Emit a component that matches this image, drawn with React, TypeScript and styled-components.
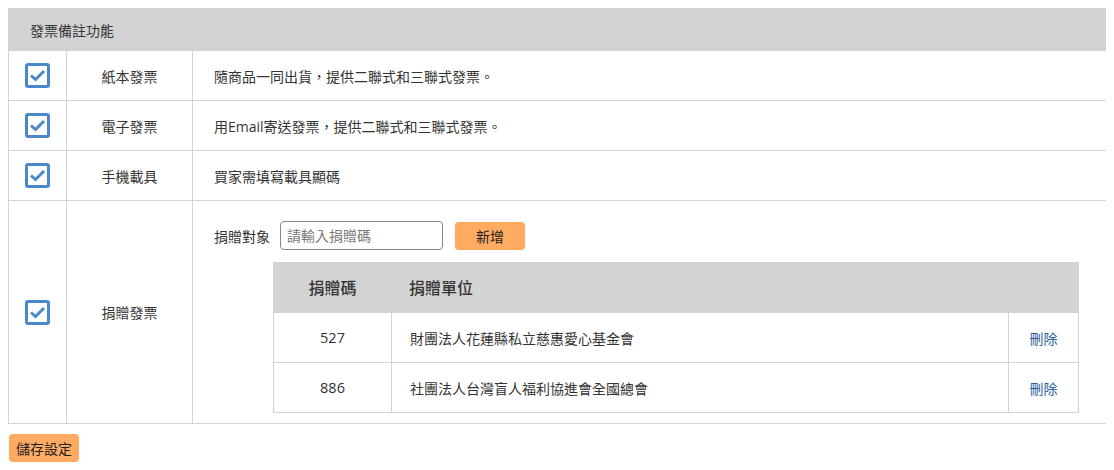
import React, { useState } from 'react';
import styled, { createGlobalStyle } from 'styled-components';

const GlobalStyle = createGlobalStyle`
  body {
    margin: 8px;
    font-family: "Open Sans", "Noto Sans CJK TC", sans-serif;
    font-size: 14px;
    color: #333;
    background: #fff;
  }
  * { box-sizing: border-box; }
`;

const SettingsTable = styled.div`
  width: 1101px;
  border: 1px solid #d3d3d3;
  display: grid;
  grid-template-columns: 57px 126px 1fr;
`;

const HeaderBar = styled.div`
  grid-column: 1 / -1;
  height: 41px;
  background: #d3d3d3;
  display: flex;
  align-items: center;
  padding-left: 21px;
  font-size: 14px;
  color: #333;
`;

const Cell = styled.div`
  height: 50px;
  border-top: 1px solid #d3d3d3;
  display: flex;
  align-items: center;
  font-size: 14px;
`;

const CheckCell = styled(Cell)`
  height: auto;
  min-height: 50px;
  justify-content: center;
`;

const NameCell = styled(CheckCell)`
  border-left: 1px solid #d3d3d3;
`;

const DescCell = styled(Cell)`
  border-left: 1px solid #d3d3d3;
  padding-left: 21px;
`;

const DonateCell = styled.div`
  border-top: 1px solid #d3d3d3;
  border-left: 1px solid #d3d3d3;
  padding: 20px 29px 10px 21px;
  display: flex;
  flex-direction: column;
`;

const Check = styled.span`
  width: 25px;
  height: 25px;
  border: 3px solid #4a88c9;
  border-radius: 3px;
  display: flex;
  align-items: center;
  justify-content: center;
  cursor: pointer;
`;

const FormRow = styled.div`
  display: flex;
  align-items: center;
  font-size: 14px;
`;

const FieldLabel = styled.span`
  margin-right: 10px;
`;

const TextInput = styled.input`
  width: 163px;
  height: 29px;
  border: 1px solid #888;
  border-radius: 4px;
  padding: 0 6px;
  font-family: "Open Sans", "Noto Sans CJK TC", sans-serif;
  font-size: 14px;
  color: #333;
  &::placeholder { color: #777; }
`;

const OrangeButton = styled.button<{ $w: number }>`
  width: ${(p) => p.$w}px;
  height: 28px;
  background: #ffab62;
  border: none;
  border-radius: 4px;
  font-family: "Open Sans", "Noto Sans CJK TC", sans-serif;
  font-size: 14px;
  color: #222;
  cursor: pointer;
  padding: 0;
`;

const AddButton = styled(OrangeButton)`
  margin-left: 12px;
`;

const SaveButton = styled(OrangeButton)`
  margin-top: 10px;
  margin-left: 1px;
`;

const DonateTable = styled.div`
  margin: 12px 0 0 59px;
  border: 1px solid #d3d3d3;
  border-top: none;
  display: grid;
  grid-template-columns: 117px 1fr 70px;
`;

const DHead = styled.div<{ $center?: boolean }>`
  height: 50px;
  background: #d3d3d3;
  display: flex;
  align-items: center;
  justify-content: ${(p) => (p.$center ? 'center' : 'flex-start')};
  padding-left: ${(p) => (p.$center ? '0' : '18px')};
  font-size: 16px;
  font-weight: 500;
  color: #333;
`;

const DCell = styled.div<{ $center?: boolean; $divider?: boolean }>`
  height: 50px;
  border-top: 1px solid #d3d3d3;
  border-left: ${(p) => (p.$divider ? '1px solid #d3d3d3' : 'none')};
  display: flex;
  align-items: center;
  justify-content: ${(p) => (p.$center ? 'center' : 'flex-start')};
  padding-left: ${(p) => (p.$center ? '0' : '18px')};
  font-size: 14px;
`;

const NumText = styled.span`
  font-size: 14.5px;
`;

const DeleteLink = styled.a`
  color: #2b5d9c;
  cursor: pointer;
  text-decoration: none;
`;

const CheckIcon = () => (
  <svg width="17" height="13" viewBox="0 0 17 13">
    <path d="M2 6.5 L6.5 10.5 L15 2" fill="none" stroke="#4a88c9" strokeWidth="3" />
  </svg>
);

const types = [
  { name: '紙本發票', desc: '隨商品一同出貨，提供二聯式和三聯式發票。' },
  { name: '電子發票', desc: '用Email寄送發票，提供二聯式和三聯式發票。' },
  { name: '手機載具', desc: '買家需填寫載具顯碼' },
];

const App: React.FC = () => {
  const [code, setCode] = useState('');
  const [units] = useState([
    { code: '527', name: '財團法人花蓮縣私立慈惠愛心基金會' },
    { code: '886', name: '社團法人台灣盲人福利協進會全國總會' },
  ]);

  return (
    <>
      <GlobalStyle />
      <SettingsTable>
        <HeaderBar>發票備註功能</HeaderBar>
        {types.map((t) => (
          <React.Fragment key={t.name}>
            <CheckCell>
              <Check><CheckIcon /></Check>
            </CheckCell>
            <NameCell>{t.name}</NameCell>
            <DescCell>{t.desc}</DescCell>
          </React.Fragment>
        ))}
        <CheckCell>
          <Check><CheckIcon /></Check>
        </CheckCell>
        <NameCell>捐贈發票</NameCell>
        <DonateCell>
          <FormRow>
            <FieldLabel>捐贈對象</FieldLabel>
            <TextInput
              placeholder="請輸入捐贈碼"
              value={code}
              onChange={(e) => setCode(e.target.value)}
            />
            <AddButton $w={70}>新增</AddButton>
          </FormRow>
          <DonateTable>
            <DHead $center>捐贈碼</DHead>
            <DHead>捐贈單位</DHead>
            <DHead />
            {units.map((u) => (
              <React.Fragment key={u.code}>
                <DCell $center><NumText>{u.code}</NumText></DCell>
                <DCell $divider>{u.name}</DCell>
                <DCell $center $divider>
                  <DeleteLink>刪除</DeleteLink>
                </DCell>
              </React.Fragment>
            ))}
          </DonateTable>
        </DonateCell>
      </SettingsTable>
      <SaveButton $w={70}>儲存設定</SaveButton>
    </>
  );
};

export default App;
